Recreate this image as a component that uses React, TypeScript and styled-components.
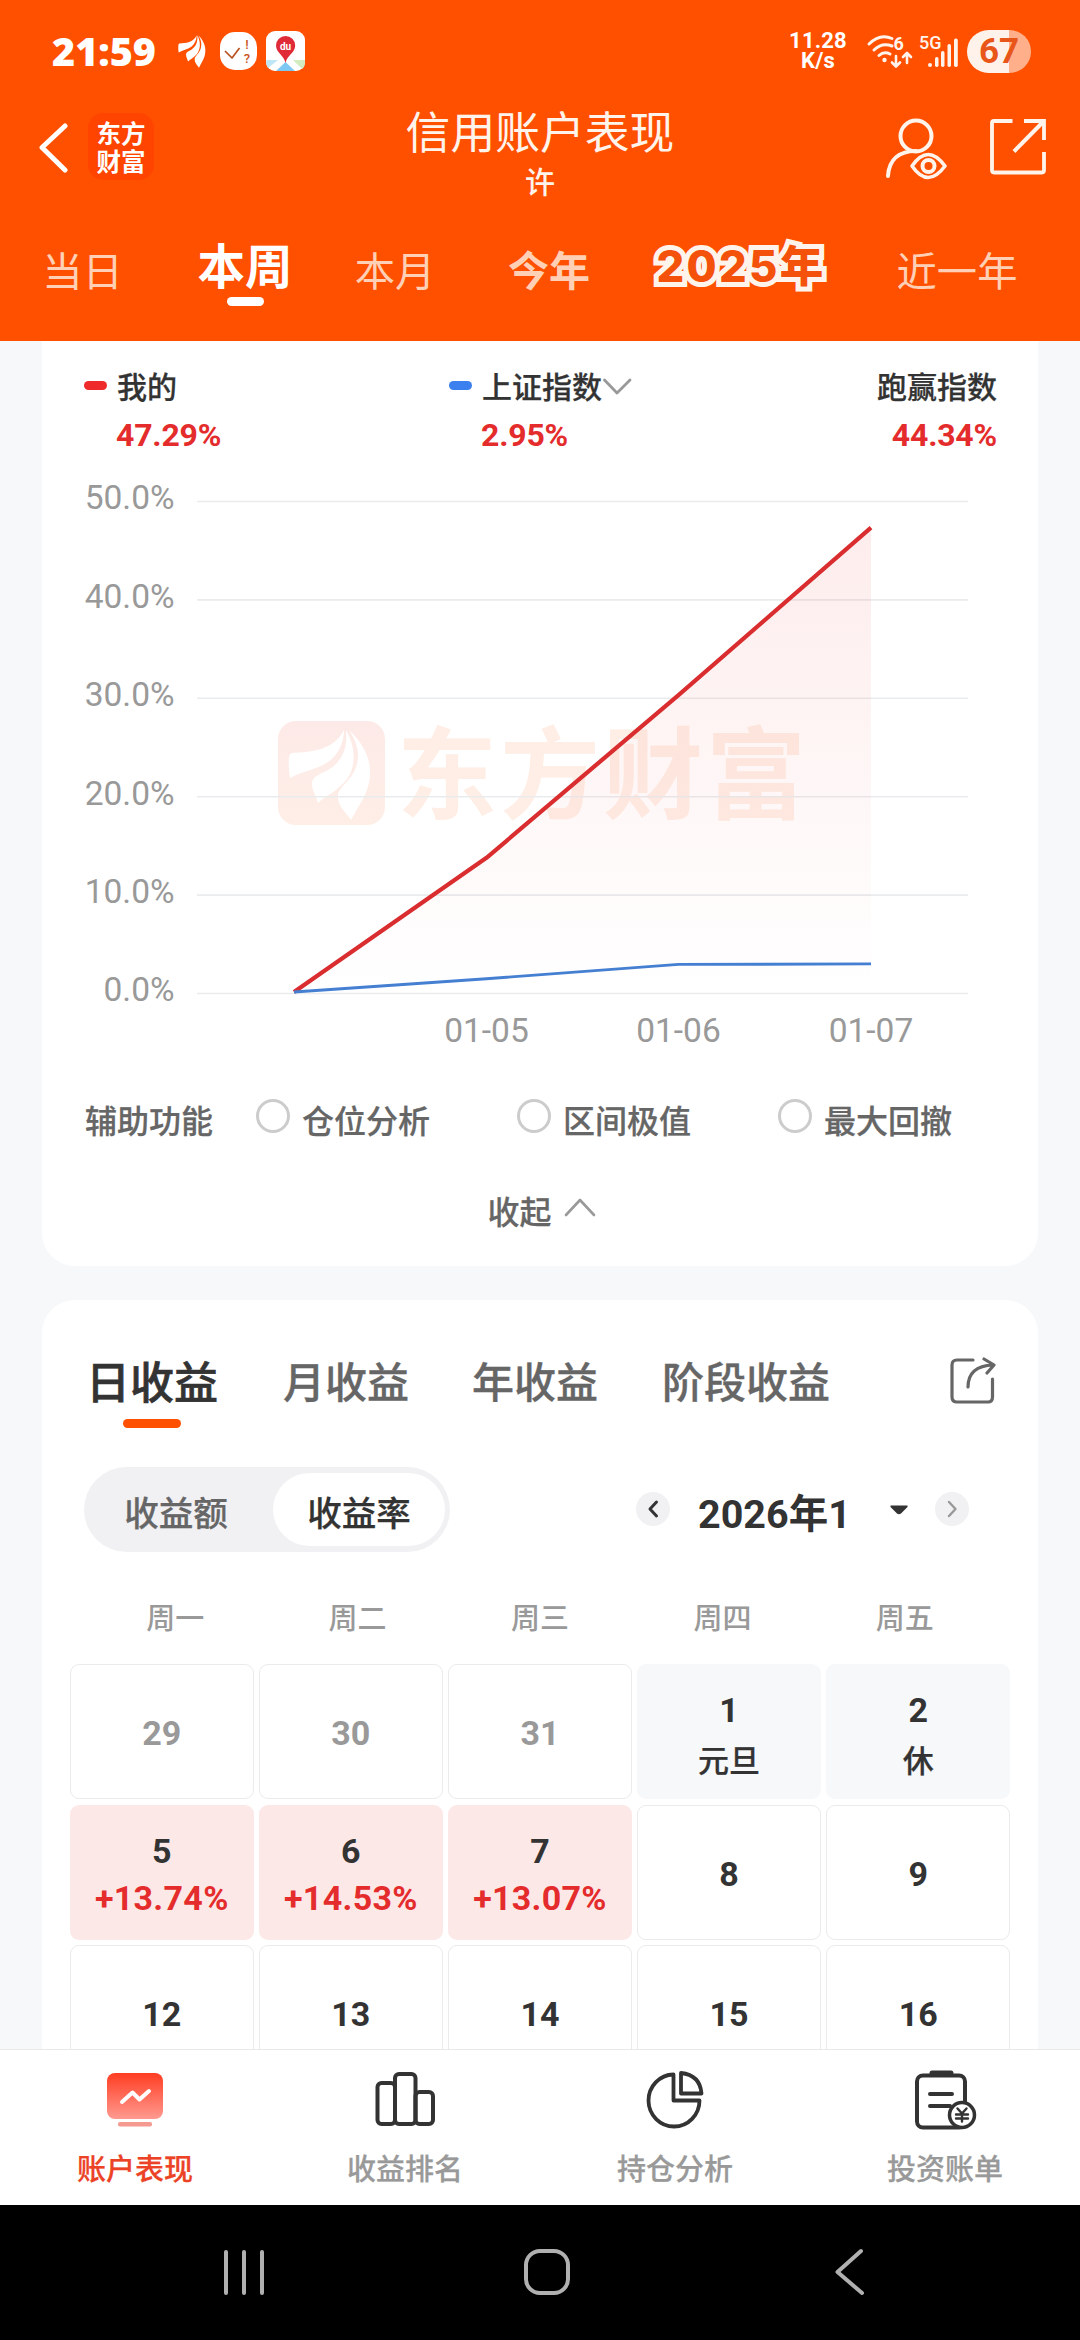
import React from "react";
import styled, { createGlobalStyle, css } from "styled-components";

const ORANGE = "#ff5000";
const RED = "#e42c2c";
const CJK = `"Noto Sans CJK SC", sans-serif`;

const GlobalStyle = createGlobalStyle`
  * { box-sizing: border-box; }
  body { margin: 0; background: #f7f8fa; }
`;

const Screen = styled.div`
  width: 1080px;
  height: 2340px;
  display: flex;
  flex-direction: column;
  overflow: hidden;
  background: #f7f8fa;
  font-family: Roboto, ${CJK};
  color: #333;
  white-space: nowrap;
`;

/* A little extra weight between the Medium and Bold cuts. */
const semi = css`
  -webkit-text-stroke: 0.25px currentColor;
`;

/* ---------- header ---------- */
const Header = styled.header`
  height: 341px;
  flex: none;
  background: ${ORANGE};
  color: #fff4ec;
  display: flex;
  flex-direction: column;
`;

const StatusBar = styled.div`
  height: 102px;
  padding: 0 49px 0 52px;
  display: flex;
  align-items: center;
  justify-content: space-between;
`;

const StatusGroup = styled.div`
  display: flex;
  align-items: center;
`;

const Clock = styled.span`
  font: 800 39.5px/40px "Open Sans", sans-serif;
  width: 105px;
  margin-right: 21px;
  color: #fff;
`;

const StatusIcon = styled.svg<{ $gap?: number }>`
  display: block;
  flex: none;
  overflow: visible;
  margin-right: ${(p) => p.$gap ?? 0}px;
`;

const NetSpeed = styled.div`
  display: flex;
  flex-direction: column;
  align-items: center;
  font: 700 22px/20px Roboto, sans-serif;
  width: 56px;
  margin-right: 21px;
  letter-spacing: 0.2px;
  color: #fff;
`;

const Battery = styled.div`
  width: 64px;
  height: 43px;
  border-radius: 22px;
  background: linear-gradient(90deg, #fff2ea 66%, #ffb08a 66%);
  color: #e8561a;
  font: 700 35px/44px Roboto, sans-serif;
  text-align: center;
`;

const TitleBar = styled.div`
  height: 110px;
  display: grid;
  grid-template-columns: 340px 1fr 340px;
`;

const TitleLeft = styled.div`
  display: flex;
  align-items: flex-start;
  padding: 11px 0 0 37px;
  gap: 20px;
`;

const BrandBadge = styled.div`
  width: 66px;
  height: 67px;
  border-radius: 15px;
  background: #ff4400;
  color: #fff;
  display: flex;
  flex-direction: column;
  align-items: center;
  justify-content: center;
  font: 700 24.5px/28px ${CJK};
`;

const TitleCenter = styled.div`
  display: flex;
  flex-direction: column;
  align-items: center;
`;

const Title = styled.h1`
  margin: 0;
  font: 400 44.8px/56px ${CJK};
`;

const Subtitle = styled.span`
  font: 500 30px/40px ${CJK};
  margin-top: 2px;
`;

const TitleRight = styled.div`
  display: flex;
  justify-content: flex-end;
  gap: 40px;
  padding: 13px 34px 0 0;
`;

const PeriodTabs = styled.nav`
  height: 129px;
  display: grid;
  grid-template-columns: 165px 160px 140px 168px 214px 220px;
  padding-top: 20px;
`;

const PeriodTab = styled.div<{ $kind?: "active" | "bold" | "outline" }>`
  display: flex;
  flex-direction: column;
  align-items: center;
  font: 400 40.3px/73px ${CJK};
  color: #ffd0b6;
  ${(p) => p.$kind === "active" && css`font-size: 47.5px; font-weight: 700; line-height: 64px; color: #fff;`}
  ${(p) => p.$kind === "bold" && css`font-size: 41px; font-weight: 700;`}
`;

const PeriodLine = styled.i`
  width: 37px;
  height: 9px;
  margin-top: 1px;
  border-radius: 5px;
  background: #fff;
`;

const OutlineText = styled.span`
  font: 800 43.5px/68px Inter, ${CJK};
  letter-spacing: 2.3px;
  padding-left: 2px;
  color: #f4510a;
  -webkit-text-stroke: 10px #fff4ec;
  paint-order: stroke fill;
`;

/* ---------- cards ---------- */
const Body = styled.main`
  height: 1708px;
  flex: none;
  overflow: hidden;
  padding: 0 42px;
  display: flex;
  flex-direction: column;
  gap: 34px;
`;

const ChartCard = styled.section`
  height: 925px;
  flex: none;
  background: #fff;
  border-radius: 0 0 33px 33px;
  display: flex;
  flex-direction: column;
`;

const Legend = styled.div`
  height: 129px;
  padding: 22px 41px 0 42px;
  display: grid;
  grid-template-columns: 365px 1fr auto;
`;

const LegendItem = styled.div<{ $end?: boolean }>`
  display: flex;
  flex-direction: column;
  ${(p) => p.$end && css`align-items: flex-end;`}
`;

const LegendName = styled.div`
  display: flex;
  align-items: center;
  height: 44px;
  font: 500 30px/44px ${CJK};
  ${semi}
`;

const LegendPill = styled.i<{ $color: string }>`
  width: 23px;
  height: 9px;
  border-radius: 5px;
  margin-right: 10px;
  background: ${(p) => p.$color};
`;

const LegendValue = styled.div<{ $indent?: boolean }>`
  font: 700 32px/40px Roboto, sans-serif;
  letter-spacing: -0.2px;
  color: ${RED};
  margin-top: 8px;
  padding-left: ${(p) => (p.$indent ? 32 : 0)}px;
`;

const ChartSvg = styled.svg`
  display: block;
  width: 996px;
  height: 590px;
  flex: none;
`;

const Helpers = styled.div`
  height: 118px;
  padding: 0 42px 0 43px;
  display: grid;
  grid-template-columns: 171px 261px 261px 1fr;
  align-items: center;
  font: 500 32px/46px ${CJK};
  color: #666;
  ${semi}
`;

const Helper = styled.label`
  display: flex;
  align-items: center;
  gap: 12px;
`;

const Radio = styled.i`
  width: 34px;
  height: 34px;
  border: 3px solid #ccc;
  border-radius: 50%;
  margin-top: -6px;
`;

const Collapse = styled.div`
  display: flex;
  justify-content: center;
  gap: 12px;
  padding: 9px 0 0 3px;
  font: 500 32px/46px ${CJK};
  color: #666;
  ${semi}
`;

const CollapseIcon = styled.svg`
  margin-top: 10px;
`;

const IncomeCard = styled.section`
  height: 900px;
  flex: none;
  background: #fff;
  border-radius: 33px 33px 0 0;
`;

const IncomeTabs = styled.div`
  height: 167px;
  padding: 48px 42px 0 44px;
  display: flex;
`;

const IncomeTab = styled.div<{ $active?: boolean; $gap: number }>`
  display: flex;
  flex-direction: column;
  align-items: center;
  gap: 7px;
  margin-right: ${(p) => p.$gap}px;
  font: 500 ${(p) => (p.$active ? 44 : 42)}px/64px ${CJK};
  color: ${(p) => (p.$active ? "#333" : "#666")};
  -webkit-text-stroke: ${(p) => (p.$active ? 0.7 : 0.35)}px currentColor;
`;

const IncomeLine = styled.i`
  width: 58px;
  height: 9px;
  border-radius: 5px;
  background: ${ORANGE};
`;

const ShareIcon = styled.svg`
  margin: 9px 0 0 auto;
`;

const Controls = styled.div`
  padding: 0 69px 0 42px;
  display: flex;
  justify-content: space-between;
`;

const Segmented = styled.div`
  width: 366px;
  height: 85px;
  padding: 6px 5px;
  border-radius: 43px;
  background: #f1f1f4;
  display: grid;
  grid-template-columns: 184px 172px;
`;

const Segment = styled.div<{ $on?: boolean }>`
  height: 73px;
  border-radius: 37px;
  text-align: center;
  font: 500 34.6px/77px ${CJK};
  padding-right: ${(p) => (p.$on ? 0 : 10)}px;
  color: ${(p) => (p.$on ? "#333" : "#666")};
  background: ${(p) => (p.$on ? "#fff" : "transparent")};
  ${semi}
`;

const MonthPicker = styled.div`
  height: 92px;
  display: flex;
  align-items: center;
`;

const RoundButton = styled.div`
  width: 34px;
  height: 34px;
  border-radius: 50%;
  background: #f1f1f3;
  display: grid;
  place-items: center;
  margin-top: -8px;
`;

const MonthText = styled.div`
  font: 700 39.5px/56px Roboto, ${CJK};
  width: 148px;
  margin: 3px 43px 0 28px;
`;

const Triangle = styled.svg`
  margin: -7px 27px 0 1px;
`;

const Weekdays = styled.div`
  height: 105px;
  padding: 0 42px;
  display: grid;
  grid-template-columns: repeat(5, 1fr);
  text-align: center;
  font: 500 29px/115px ${CJK};
  color: #999;
`;

const Calendar = styled.div`
  padding: 0 28px;
  display: grid;
  grid-template-columns: repeat(5, 1fr);
  grid-auto-rows: 135px;
  gap: 5.6px;
`;

type Tone = "plain" | "muted" | "holiday" | "gain";

const tones: Record<Tone, ReturnType<typeof css>> = {
  plain: css`border: 1px solid #ebebeb;`,
  muted: css`border: 1px solid #ebebeb; color: #999;`,
  holiday: css`background: #f7f8fa; padding-top: 6px;`,
  gain: css`background: #fde8e8; padding-top: 4px;`,
};

const Cell = styled.div<{ $tone: Tone }>`
  border-radius: 9px;
  display: flex;
  flex-direction: column;
  align-items: center;
  justify-content: center;
  gap: 1px;
  font: 700 34px/46px Roboto, ${CJK};
  padding-top: 3px;
  ${(p) => tones[p.$tone]}
`;

const CellNote = styled.span<{ $gain?: boolean }>`
  ${(p) =>
    p.$gain
      ? css`font-size: 34px; letter-spacing: 0.3px; color: ${RED};`
      : css`font: 500 31px/49px ${CJK}; ${semi}`}
`;

/* ---------- bottom ---------- */
const TabBar = styled.nav`
  height: 156px;
  flex: none;
  background: #fff;
  border-top: 1px solid #e8e8e8;
  display: grid;
  grid-template-columns: repeat(4, 1fr);
`;

const TabItem = styled.div<{ $active?: boolean }>`
  display: flex;
  flex-direction: column;
  align-items: center;
  padding-top: 15px;
  gap: 14px;
  font: 500 29px/44px ${CJK};
  color: ${(p) => (p.$active ? "#ec4226" : "#999")};
  ${semi}
`;

const SystemNav = styled.div`
  height: 135px;
  flex: none;
  background: #000;
  display: grid;
  grid-template-columns: 488px 117px 488px;
  padding-top: 42px;
  justify-items: center;
`;

/* ---------- drawings ---------- */
const Feathers = () => (
  <>
    <path d="M66 9C56 29 34 31 14 32Q11 33 11 37Q10 46 12 57C24 50 38 49 50 41C60 34 66 22 66 9Z" />
    <path d="M68 9C70 30 62 42 50 49C42 53 35 55 34 62C34 70 38 74 40 82C47 75 60 70 69 58C78 46 78 26 68 9Z" />
    <path d="M71 9C87 24 93 40 92 54C91 72 82 82 73 99C68 91 59 85 60 74C61 66 73 60 78 46C83 32 78 20 71 9Z" />
  </>
);

const gridLines = [0, 1, 2, 3, 4, 5].map((i) => ({ y: 501.5 + i * 98.4, label: `${50 - i * 10}.0%` }));
const yOf = (v: number) => 993 - v * 9.84;
const xs = [294, 486.5, 678.5, 871];
const mine = [0.1, 13.74, 30.27, 47.29];
const index = [0.1, 1.45, 2.9, 2.95];
const line = (vals: number[]) => vals.map((v, i) => `${xs[i]},${yOf(v)}`).join(" ");

const Chart = () => (
  <ChartSvg viewBox="42 470 996 590">
    <defs>
      <linearGradient id="area" x1="0" y1="0" x2="0" y2="1">
        <stop offset="0" stopColor="#f03030" stopOpacity="0.09" />
        <stop offset="1" stopColor="#f03030" stopOpacity="0" />
      </linearGradient>
      <linearGradient id="mark" x1="0" y1="0" x2="0" y2="1">
        <stop offset="0" stopColor="#fdeae8" />
        <stop offset="1" stopColor="#feeee6" />
      </linearGradient>
    </defs>
    <rect x="278" y="721" width="107" height="104" rx="18" fill="url(#mark)" />
    <g transform="translate(278 721)" fill="#fff">
      <Feathers />
    </g>
    <text x="397" y="811" fill="#feeee5" fontFamily="Noto Sans CJK SC" fontWeight="700" fontSize="100" letterSpacing="3">
      东方财富
    </text>
    {gridLines.map((g) => (
      <g key={g.label}>
        <line x1="197" x2="968" y1={g.y} y2={g.y} stroke="#e9ebed" strokeWidth="1.6" />
        <text x="174.5" y={g.y + 7.8} textAnchor="end" fontSize="33.5" fill="#999">
          {g.label}
        </text>
      </g>
    ))}
    <polygon points={`${line(mine)} 871,993 294,993`} fill="url(#area)" />
    <polyline points={line(mine)} fill="none" stroke="#d92d2f" strokeWidth="4.2" strokeLinejoin="round" />
    <polyline points={line(index)} fill="none" stroke="#447fd2" strokeWidth="2.8" strokeLinejoin="round" />
    {["01-05", "01-06", "01-07"].map((d, i) => (
      <text key={d} x={xs[i + 1]} y="1042" textAnchor="middle" fontSize="33.5" fill="#999">
        {d}
      </text>
    ))}
  </ChartSvg>
);

const stroke = (color: string, width: number) => ({
  fill: "none",
  stroke: color,
  strokeWidth: width,
  strokeLinecap: "round" as const,
  strokeLinejoin: "round" as const,
});

const days: { d: number; tone: Tone; note?: string }[] = [
  { d: 29, tone: "muted" },
  { d: 30, tone: "muted" },
  { d: 31, tone: "muted" },
  { d: 1, tone: "holiday", note: "元旦" },
  { d: 2, tone: "holiday", note: "休" },
  { d: 5, tone: "gain", note: "+13.74%" },
  { d: 6, tone: "gain", note: "+14.53%" },
  { d: 7, tone: "gain", note: "+13.07%" },
  { d: 8, tone: "plain" },
  { d: 9, tone: "plain" },
  { d: 12, tone: "plain" },
  { d: 13, tone: "plain" },
  { d: 14, tone: "plain" },
  { d: 15, tone: "plain" },
  { d: 16, tone: "plain" },
];

export default function App() {
  return (
    <Screen>
      <GlobalStyle />
      <Header>
        <StatusBar>
          <StatusGroup>
            <Clock>21:59</Clock>
            <StatusIcon $gap={14} width="28" height="33" viewBox="10 8 84 92" preserveAspectRatio="none" fill="#fff">
              <Feathers />
            </StatusIcon>
            <StatusIcon $gap={9} width="37" height="38" viewBox="0 0 37 38">
              <rect width="37" height="38" rx="15" fill="#fff" />
              <path d="M5 19l7 7L19.500 16" {...stroke("#b8531f", 1.7)} strokeLinecap="butt" />
              <text x="27" y="17" textAnchor="middle" fontSize="13" fontWeight="500" fill="#c8561c">!</text>
              <text x="27" y="31" textAnchor="middle" fontSize="13" fontWeight="500" fill="#c8561c">?</text>
            </StatusIcon>
            <StatusIcon width="39" height="40" viewBox="0 0 39 40">
              <rect width="39" height="40" rx="9" fill="#fff" />
              <path d="M1 29h11L2 37Q0 34 0 30z" fill="#bfe6f5" />
              <path d="M27 29h12v2q0 5-3 7z" fill="#d2ecc0" />
              <path d="M19.500 31L10 40h19z" fill="#7cc8f2" />
              <path d="M19.500 32C18 24 10 22 10 14.500a9.600 9.600 0 0 1 19.200 0C29.200 22 21 24 19.500 32z" fill="#e02a38" />
              <text x="19.500" y="19" textAnchor="middle" fontSize="10" fontWeight="700" fill="#fff">du</text>
            </StatusIcon>
          </StatusGroup>
          <StatusGroup>
            <NetSpeed>
              <span>11.28</span>
              <span>K/s</span>
            </NetSpeed>
            <StatusIcon $gap={7} width="45" height="34" viewBox="0 0 45 34">
              <path d="M2 10Q13 -1 25 4.500M7 16Q15 8 25 12M12 21.500Q17 17 23 20" {...stroke("#fff4ec", 3)} />
              <circle cx="17.500" cy="26" r="2.200" fill="#fff4ec" />
              <text x="26.500" y="15.500" fontSize="18" fontWeight="700" fill="#fff4ec">6</text>
              <path d="M29 22v10M25 28.500l4 4 4-4M40 29V19M36 23l4-4 4 4" {...stroke("#fff4ec", 2.6)} />
            </StatusIcon>
            <StatusIcon $gap={8} width="40" height="34" viewBox="0 0 40 34" fill="#fff4ec">
              <text x="0" y="14.500" fontSize="18" fontWeight="500">5G</text>
              <circle cx="11" cy="31" r="2" />
              <rect x="16" y="23" width="3.500" height="10" rx="1.700" />
              <rect x="22" y="17" width="3.500" height="16" rx="1.700" />
              <rect x="28.500" y="10" width="3.500" height="23" rx="1.700" />
              <rect x="35" y="4.500" width="3.800" height="28.500" rx="1.700" />
            </StatusIcon>
            <Battery>67</Battery>
          </StatusGroup>
        </StatusBar>
        <TitleBar>
          <TitleLeft>
            <svg width="31" height="67" viewBox="0 0 31 67">
              <path d="M28 13L5 34.500 28 57" {...stroke("#fff", 5)} />
            </svg>
            <BrandBadge>
              <span>东方</span>
              <span>财富</span>
            </BrandBadge>
          </TitleLeft>
          <TitleCenter>
            <Title>信用账户表现</Title>
            <Subtitle>许</Subtitle>
          </TitleCenter>
          <TitleRight>
            <svg width="64" height="66" viewBox="0 0 64 66">
              <circle cx="32" cy="21" r="15.500" {...stroke("#fff4ec", 4)} />
              <path d="M4 61C5 44 16 36 32 36" {...stroke("#fff4ec", 4)} />
              <path d="M28 51Q44 28 61 51Q44 74 28 51Z" {...stroke("#fff4ec", 3.6)} />
              <circle cx="44.500" cy="51" r="6" {...stroke("#fff4ec", 4)} />
            </svg>
            <svg width="58" height="62" viewBox="0 0 58 62">
              <path d="M24.500 6H6Q4 6 4 8V55Q4 57.500 6 57.500H54Q56 57.500 56 55V37M36 6H56V25" {...stroke("#fff4ec", 3.8)} strokeLinecap="butt" strokeLinejoin="miter" />
              <path d="M55 7L26 36.500" {...stroke("#fff4ec", 4)} strokeLinecap="butt" />
            </svg>
          </TitleRight>
        </TitleBar>
        <PeriodTabs>
          <PeriodTab>当日</PeriodTab>
          <PeriodTab $kind="active">
            本周
            <PeriodLine />
          </PeriodTab>
          <PeriodTab>本月</PeriodTab>
          <PeriodTab $kind="bold">今年</PeriodTab>
          <PeriodTab $kind="outline">
            <OutlineText>2025年</OutlineText>
          </PeriodTab>
          <PeriodTab>近一年</PeriodTab>
        </PeriodTabs>
      </Header>

      <Body>
        <ChartCard>
          <Legend>
            <LegendItem>
              <LegendName>
                <LegendPill $color="#ee2a2a" />
                我的
              </LegendName>
              <LegendValue $indent>47.29%</LegendValue>
            </LegendItem>
            <LegendItem>
              <LegendName>
                <LegendPill $color="#3b80ee" />
                上证指数
                <svg width="30" height="20" viewBox="0 0 30 20">
                  <path d="M2.500 5L15 18 28 5" {...stroke("#999", 2.8)} />
                </svg>
              </LegendName>
              <LegendValue $indent>2.95%</LegendValue>
            </LegendItem>
            <LegendItem $end>
              <LegendName>跑赢指数</LegendName>
              <LegendValue>44.34%</LegendValue>
            </LegendItem>
          </Legend>
          <Chart />
          <Helpers>
            <span>辅助功能</span>
            {["仓位分析", "区间极值", "最大回撤"].map((t) => (
              <Helper key={t}>
                <Radio />
                {t}
              </Helper>
            ))}
          </Helpers>
          <Collapse>
            收起
            <CollapseIcon width="32" height="20" viewBox="0 0 32 20">
              <path d="M2 18L16 3 30 18" {...stroke("#999", 2.6)} />
            </CollapseIcon>
          </Collapse>
        </ChartCard>

        <IncomeCard>
          <IncomeTabs>
            <IncomeTab $active $gap={65}>
              日收益
              <IncomeLine />
            </IncomeTab>
            <IncomeTab $gap={63}>月收益</IncomeTab>
            <IncomeTab $gap={64}>年收益</IncomeTab>
            <IncomeTab $gap={0}>阶段收益</IncomeTab>
            <ShareIcon width="46" height="48" viewBox="0 0 46 48">
              <path d="M23 3H7Q2 3 2 8V40Q2 45 7 45H38Q42.500 45 42.500 40V22" {...stroke("#666", 3.2)} />
              <path d="M18 30Q18 9 43 8M34 2L44 8 37 16" {...stroke("#666", 3.2)} />
            </ShareIcon>
          </IncomeTabs>
          <Controls>
            <Segmented>
              <Segment>收益额</Segment>
              <Segment $on>收益率</Segment>
            </Segmented>
            <MonthPicker>
              <RoundButton>
                <svg width="14" height="20" viewBox="0 0 14 20">
                  <path d="M10.500 3L4 10l6.500 7" {...stroke("#333", 3)} />
                </svg>
              </RoundButton>
              <MonthText>2026年1</MonthText>
              <Triangle width="18" height="10" viewBox="0 0 18 10">
                <path d="M0.500 0.500H17.500V2L11 8.500Q9 10 7 8.500L0.500 2Z" fill="#333" />
              </Triangle>
              <RoundButton>
                <svg width="14" height="20" viewBox="0 0 14 20">
                  <path d="M4 3l6.500 7L4 17" {...stroke("#999", 2.4)} />
                </svg>
              </RoundButton>
            </MonthPicker>
          </Controls>
          <Weekdays>
            {["周一", "周二", "周三", "周四", "周五"].map((w) => (
              <span key={w}>{w}</span>
            ))}
          </Weekdays>
          <Calendar>
            {days.map((c) => (
              <Cell key={c.d} $tone={c.tone}>
                {c.d}
                {c.note && <CellNote $gain={c.tone === "gain"}>{c.note}</CellNote>}
              </Cell>
            ))}
          </Calendar>
        </IncomeCard>
      </Body>

      <TabBar>
        <TabItem $active>
          <svg width="64" height="66" viewBox="0 0 64 66">
            <defs>
              <linearGradient id="tv" x1="0" y1="0" x2="0" y2="1">
                <stop offset="0" stopColor="#ff3d22" />
                <stop offset="1" stopColor="#ff9a90" />
              </linearGradient>
            </defs>
            <rect x="4" y="8" width="56" height="46" rx="8" fill="url(#tv)" />
            <path d="M19 37L29.500 27.500 36.500 34.500 46 26" {...stroke("#fff", 4)} />
            <rect x="15" y="57" width="34" height="4.500" rx="2" fill="#f49a90" />
          </svg>
          账户表现
        </TabItem>
        <TabItem>
          <svg width="64" height="66" viewBox="0 0 64 66">
            <g {...stroke("#333", 4)}>
              <rect x="4.500" y="18" width="17.500" height="41" rx="4" />
              <rect x="22" y="9" width="20.500" height="50" rx="4" />
              <rect x="42.500" y="27" width="17.500" height="32" rx="4" />
            </g>
          </svg>
          收益排名
        </TabItem>
        <TabItem>
          <svg width="64" height="66" viewBox="0 0 64 66">
            <path d="M30.500 9.500A25.500 26 0 1 0 56.500 35.500H30.500Z" {...stroke("#333", 3.8)} />
            <path d="M38 8Q57 10 58.500 28.500H38Z" {...stroke("#333", 3.8)} />
          </svg>
          持仓分析
        </TabItem>
        <TabItem>
          <svg width="64" height="66" viewBox="0 0 64 66">
            <rect x="4" y="10.500" width="48" height="52" rx="6" {...stroke("#333", 4)} />
            <path d="M19 8h19" {...stroke("#333", 5)} />
            <path d="M17 29h22M17 41h20" {...stroke("#333", 4)} />
            <circle cx="49" cy="50" r="12.500" fill="#fff" stroke="#333" strokeWidth="3.500" />
            <path d="M44.500 43.500L49 48.500 53.500 43.500M49 48.500V56.500M43 49.500h12M43 53.500h12" {...stroke("#333", 2.4)} />
          </svg>
          投资账单
        </TabItem>
      </TabBar>

      <SystemNav>
        <svg width="44" height="50" viewBox="0 0 44 50">
          <path d="M4 5V46M22 5V46M40 5V46" {...stroke("#b0b0b0", 4)} />
        </svg>
        <svg width="50" height="50" viewBox="0 0 50 50">
          <rect x="4" y="4" width="42" height="42" rx="14" {...stroke("#b0b0b0", 4)} />
        </svg>
        <svg width="44" height="50" viewBox="0 0 44 50">
          <path d="M34 4L10.500 25 35 46" {...stroke("#b0b0b0", 4)} />
        </svg>
      </SystemNav>
    </Screen>
  );
}
